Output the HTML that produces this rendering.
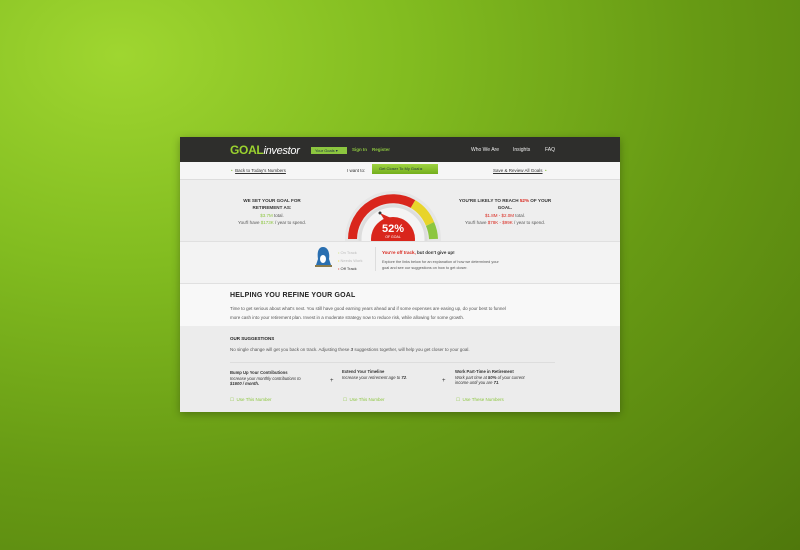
<!DOCTYPE html>
<html><head><meta charset="utf-8"><style>
*{margin:0;padding:0;box-sizing:border-box}
body{width:800px;height:550px;overflow:hidden;font-family:"Liberation Sans",sans-serif;
background:radial-gradient(ellipse at 15% 10%,#9fd630 0%,#82bc20 30%,#679a14 60%,#4f780c 100%);position:relative}
.card{position:absolute;left:180px;top:137px;width:440px;height:275px;background:#f1f1f1;overflow:hidden;box-shadow:0 2px 8px rgba(0,0,0,.3)}
.a{position:absolute;white-space:nowrap}
.hdr{position:absolute;left:0;top:0;width:440px;height:25px;background:#2e2e2c}
.g{color:#8cc63f}.r{color:#d9261c}
.t{font-size:4.5px;color:#555}
</style></head><body>
<div class="card">
 <div class="hdr">
  <div class="a" style="left:50px;top:6px;font-size:12px;font-weight:bold;color:#9ad12f;letter-spacing:-.3px">GOAL<span style="font-style:italic;font-weight:normal;color:#fff;font-size:11px">investor</span></div>
  <div class="a" style="left:131px;top:10px;width:36px;height:7px;background:#8cc63f;font-size:4px;color:#234;line-height:7px;padding-left:4px">Your Goals ▾</div>
  <div class="a g" style="left:172px;top:10px;font-size:4.5px;font-weight:bold">Sign In</div>
  <div class="a g" style="left:192px;top:10px;font-size:4.5px;font-weight:bold">Register</div>
  <div class="a" style="left:291px;top:10px;font-size:5px;color:#eee">Who We Are</div>
  <div class="a" style="left:333px;top:10px;font-size:5px;color:#eee">Insights</div>
  <div class="a" style="left:365px;top:10px;font-size:5px;color:#eee">FAQ</div>
 </div>
 <div class="a" style="left:0;top:25px;width:440px;height:18px;background:#f6f6f6;border-bottom:1px solid #ddd"></div>
 <div class="a" style="left:51px;top:31px;font-size:4.5px;color:#333"><span class="g">•</span> &nbsp;<u>Back to Today's Numbers</u></div>
 <div class="a" style="left:167px;top:31px;font-size:4.5px;color:#333">I want to:</div>
 <div class="a" style="left:192px;top:27px;width:66px;height:10px;background:linear-gradient(#9fd441,#74ae1c);font-size:4px;color:#234;line-height:10px;padding-left:7px">Get Closer To My Goal ▸</div>
 <div class="a" style="left:313px;top:31px;font-size:4.5px;color:#333"><u>Save &amp; Review All Goals</u> &nbsp;<span class="g">•</span></div>
 <div class="a" style="left:0;top:43px;width:440px;height:61px;background:#eeeeee"></div>
 <div class="a" style="left:52px;top:60px;width:80px;text-align:center;font-size:4.6px;font-weight:bold;color:#333;line-height:7px;white-space:normal">WE SET YOUR GOAL FOR RETIREMENT AS:</div>
 <div class="a t" style="left:42px;top:75px;width:100px;text-align:center;line-height:7px;white-space:normal"><span class="g">$3.7M</span> total.<br>You'll have <span class="g">$173K</span> / year to spend.</div>
 <div class="a" style="left:275px;top:60px;width:100px;text-align:center;font-size:4.6px;font-weight:bold;color:#333;line-height:7px;white-space:normal">YOU'RE LIKELY TO REACH <span class="r">52%</span> OF YOUR GOAL.</div>
 <div class="a t" style="left:270px;top:75px;width:110px;text-align:center;line-height:7px;white-space:normal"><span class="r">$1.8M - $2.0M</span> total.<br>You'll have <span class="r">$78K - $99K</span> / year to spend.</div>
 <svg class="a" style="left:165px;top:43px" width="100" height="62" viewBox="0 0 100 62">
  <circle cx="48" cy="59" r="48" fill="#e6e6e6"/>
  <path d="M7.5 59 A40.5 40.5 0 0 1 68 24" fill="none" stroke="#d9261c" stroke-width="9"/>
  <path d="M68 24 A40.5 40.5 0 0 1 85 44" fill="none" stroke="#e8d42a" stroke-width="9"/>
  <path d="M85 44 A40.5 40.5 0 0 1 88.5 59" fill="none" stroke="#8cc63f" stroke-width="9"/>
  <circle cx="48" cy="59" r="33" fill="#f4f4f4" stroke="#ddd" stroke-width="3"/>
  <circle cx="48" cy="59" r="22" fill="#d9261c"/>
  <path d="M40 41 L35 33 L46 38Z" fill="#d9261c"/>
  <circle cx="35" cy="33" r="1.5" fill="#333"/>
  <text x="48" y="52" text-anchor="middle" font-size="11" font-weight="bold" fill="#fff" font-family="Liberation Sans">52%</text>
  <text x="48" y="58" text-anchor="middle" font-size="3.5" fill="#fff" font-family="Liberation Sans">OF GOAL</text>
 </svg>
 <div class="a" style="left:0;top:104px;width:440px;height:43px;background:#f3f3f3;border-top:1px solid #e0e0e0;border-bottom:1px solid #e0e0e0"></div>
 <svg class="a" style="left:133px;top:108px" width="20" height="24"><path d="M10 2 C15 2 17 8 16 14 L18 20 L3 20 L5 14 C4 8 5 2 10 2Z" fill="#2a6fb0"/><ellipse cx="10" cy="14" rx="3" ry="4" fill="#fff"/><path d="M2 21 L19 21" stroke="#8a7a4a" stroke-width="2"/></svg>
 <div class="a" style="left:158px;top:112px;font-size:4px;color:#bbb;line-height:8px"><span style="color:#cde07a">•</span> On Track<br><span style="color:#e8d42a">•</span> Needs Work<br><span class="r">•</span> <span style="color:#333">Off Track</span></div>
 <div class="a" style="left:195px;top:110px;width:1px;height:24px;background:#ddd"></div>
 <div class="a" style="left:202px;top:113px;font-size:4.5px;font-weight:bold;color:#333"><span class="r">You're off track,</span> but don't give up!</div>
 <div class="a" style="left:202px;top:122px;font-size:3.8px;color:#555;line-height:6px">Explore the links below for an explanation of how we determined your<br>goal and see our suggestions on how to get closer.</div>
 <div class="a" style="left:0;top:147px;width:440px;height:42px;background:#f8f8f8"></div>
 <div class="a" style="left:50px;top:155px;font-size:7px;font-weight:bold;color:#222;letter-spacing:.2px">HELPING YOU REFINE YOUR GOAL</div>
 <div class="a t" style="left:50px;top:167px;line-height:9px">Time to get serious about what's next. You still have good earning years ahead and if some expenses are easing up, do your best to funnel<br>more cash into your retirement plan. Invest in a moderate strategy now to reduce risk, while allowing for some growth.</div>
 <div class="a" style="left:0;top:189px;width:440px;height:86px;background:#ececec"></div>
 <div class="a" style="left:50px;top:199px;font-size:4.5px;font-weight:bold;color:#222">OUR SUGGESTIONS</div>
 <div class="a t" style="left:50px;top:210px">No single change will get you back on track. Adjusting these <b><i>3</i></b> suggestions together, will help you get closer to your goal.</div>
 <div class="a" style="left:50px;top:225px;width:325px;height:1px;background:#ddd"></div>
 <div class="a" style="left:50px;top:233px;font-size:4.2px;color:#333;line-height:5.5px"><b>Bump Up Your Contributions</b><br><i>Increase your monthly contributions to<br><b>$1600 / month.</b></i></div>
 <div class="a" style="left:162px;top:232px;font-size:4.2px;color:#333;line-height:5.5px"><b>Extend Your Timeline</b><br><i>Increase your retirement age to <b>72</b>.</i></div>
 <div class="a" style="left:275px;top:232px;font-size:4.2px;color:#333;line-height:5.5px"><b>Work Part-Time in Retirement</b><br><i>Work part time at <b>50%</b> of your current<br>income until you are <b>71</b>.</i></div>
 <div class="a" style="left:150px;top:241px;font-size:6px;color:#333">+</div>
 <div class="a" style="left:262px;top:241px;font-size:6px;color:#333">+</div>
 <div class="a g" style="left:50px;top:260px;font-size:4.5px">☐ &nbsp;Use This Number</div>
 <div class="a g" style="left:163px;top:260px;font-size:4.5px">☐ &nbsp;Use This Number</div>
 <div class="a g" style="left:276px;top:260px;font-size:4.5px">☐ &nbsp;Use These Numbers</div>
</div>
</body></html>
